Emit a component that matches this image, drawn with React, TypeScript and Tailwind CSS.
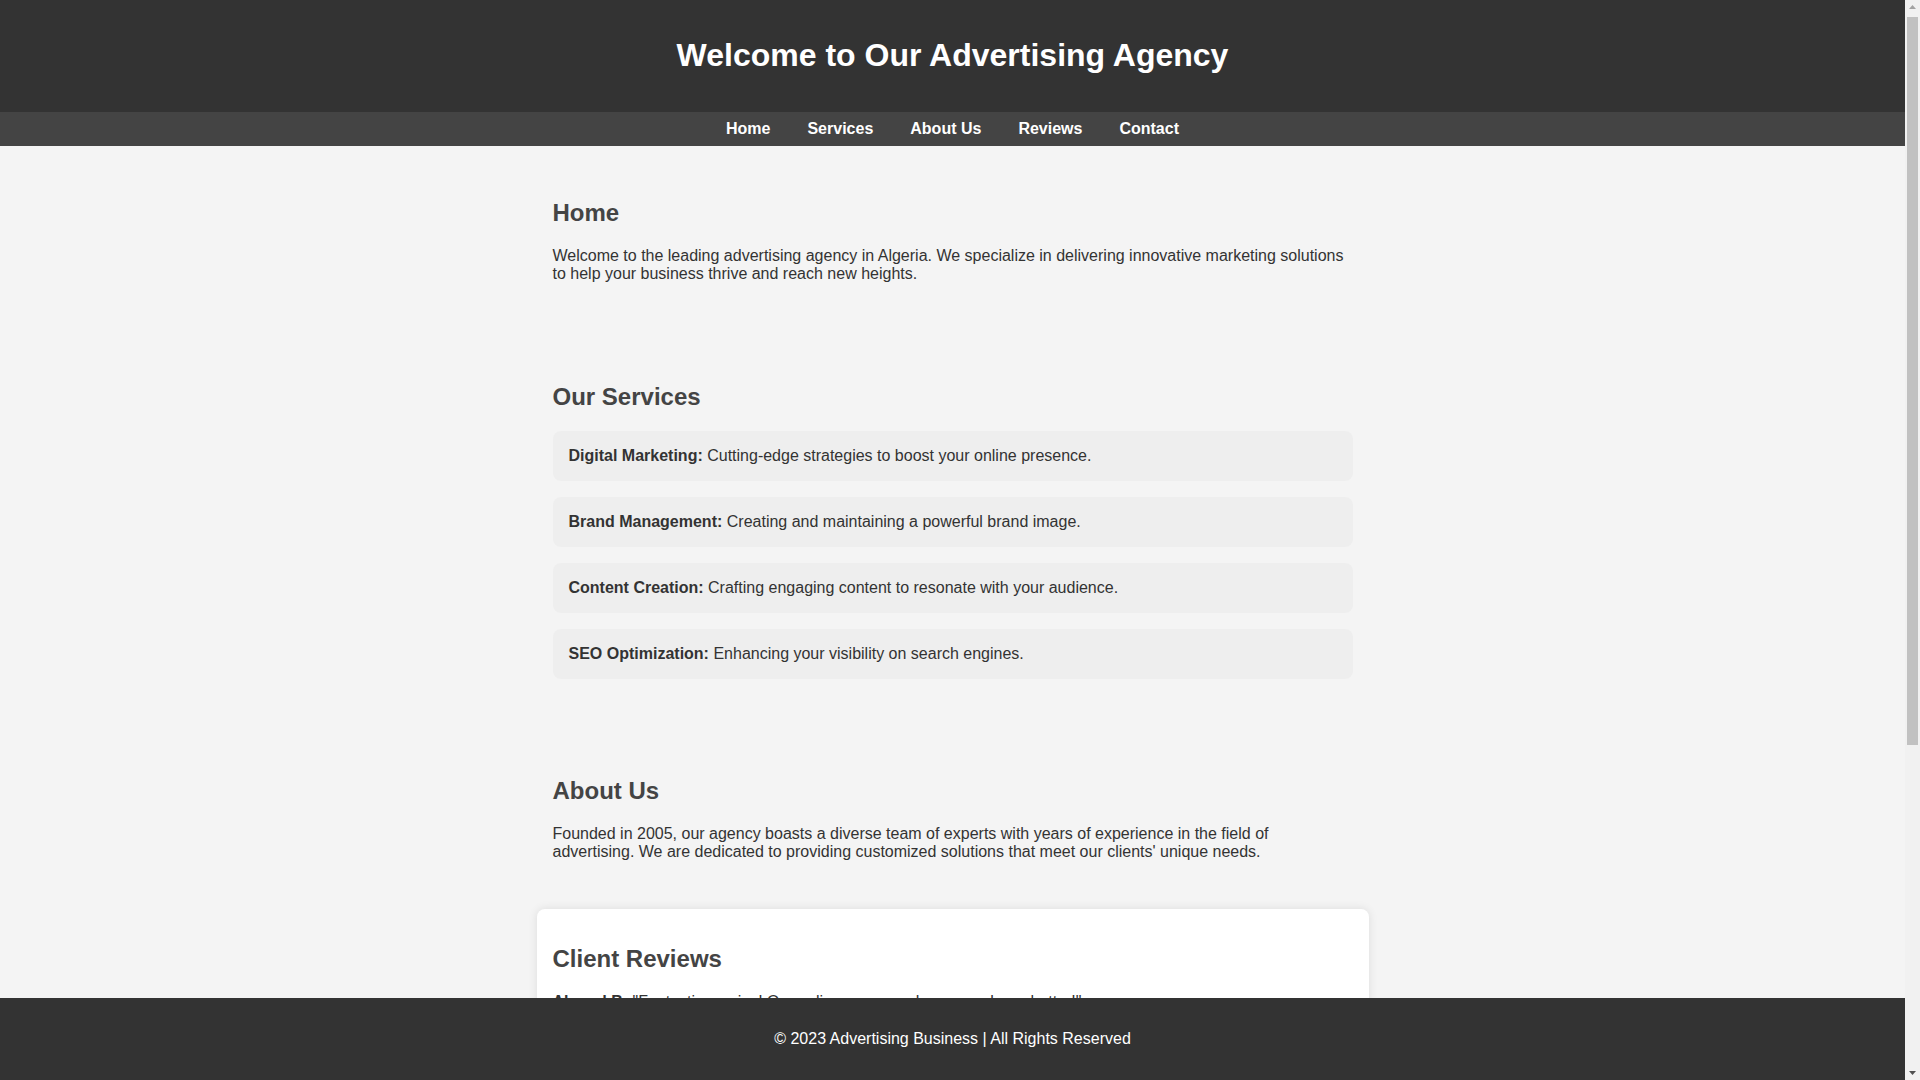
import * as React from "react";

type Service = { name: string; text: string };
type Review = { author: string; text: string };

const services: Service[] = [
  { name: "Digital Marketing:", text: "Cutting-edge strategies to boost your online presence." },
  { name: "Brand Management:", text: "Creating and maintaining a powerful brand image." },
  { name: "Content Creation:", text: "Crafting engaging content to resonate with your audience." },
  { name: "SEO Optimization:", text: "Enhancing your visibility on search engines." },
];

const reviews: Review[] = [
  { author: "Ahmed B.:", text: "\"Fantastic service! Our online presence has never been better!\"" },
  { author: "Sara K.:", text: "\"Professional team and creative ideas. Highly recommended.\"" },
  { author: "Yacine M.:", text: "\"Our sales grew thanks to their digital marketing campaigns.\"" },
];

const navLinks = ["Home", "Services", "About Us", "Reviews", "Contact"];

// 브라우저 스크롤바 모양
function ScrollBar() {
  return (
    <div className="flex w-[15px] shrink-0 flex-col items-center bg-[#f1f1f1]">
      <svg width="15" height="15" viewBox="0 0 15 15" className="shrink-0">
        <path d="M4 9 L7.5 5 L11 9 Z" fill="#a3a3a3" />
      </svg>
      <div className="mt-[2px] h-[728px] w-[11px] bg-[#c1c1c1]" />
      <div className="flex-1" />
      <svg width="15" height="15" viewBox="0 0 15 15" className="shrink-0">
        <path d="M4 6 L7.5 10 L11 6 Z" fill="#505050" />
      </svg>
    </div>
  );
}

export default function App() {
  const [form, setForm] = React.useState({ name: "", email: "", message: "" });

  return (
    <div className="flex h-screen font-['Liberation_Sans',Arial,sans-serif] text-base leading-[normal] text-[#333]">
      <div className="flex-1 overflow-y-auto bg-[#f4f4f4] [scrollbar-width:none]">
        {/* 헤더 */}
        <header className="bg-[#333] p-4 text-center text-white">
          <h1 className="my-[21.44px] text-[32px] font-bold leading-[normal]">Welcome to Our Advertising Agency</h1>
        </header>

        {/* 메뉴 */}
        <nav className="flex h-[34px] items-center justify-center gap-[37px] bg-[#444]">
          {navLinks.map((link) => (
            <a key={link} href="#" className="font-bold text-white">
              {link}
            </a>
          ))}
        </nav>

        <main className="mx-auto w-[832px] pt-[17px] pb-[100px]">
          {/* Home */}
          <section className="mb-8 p-4">
            <h2 className="my-5 text-2xl leading-[normal] font-bold text-[#444]">Home</h2>
            <p className="mb-4">
              Welcome to the leading advertising agency in Algeria. We specialize in delivering innovative marketing
              solutions to help your business thrive and reach new heights.
            </p>
          </section>

          {/* 서비스 */}
          <section className="mb-[30px] p-4">
            <h2 className="my-5 text-2xl leading-[normal] font-bold text-[#444]">Our Services</h2>
            <ul className="mb-4">
              {services.map((s) => (
                <li key={s.name} className="mb-4 rounded-lg bg-[#eee] p-4">
                  <strong>{s.name}</strong> {s.text}
                </li>
              ))}
            </ul>
          </section>

          {/* 회사 소개 */}
          <section className="mb-4 p-4">
            <h2 className="my-5 text-2xl leading-[normal] font-bold text-[#444]">About Us</h2>
            <p className="mb-4 pr-[50px]">
              Founded in 2005, our agency boasts a diverse team of experts with years of experience in the field of
              advertising. We are dedicated to providing customized solutions that meet our clients' unique needs.
            </p>
          </section>

          {/* 후기 */}
          <section className="mb-8 rounded-lg bg-white p-4 shadow-[0_0_10px_rgba(0,0,0,0.1)]">
            <h2 className="my-5 text-2xl leading-[normal] font-bold text-[#444]">Client Reviews</h2>
            {reviews.map((r) => (
              <p key={r.author} className="mb-4">
                <strong>{r.author}</strong>
                {r.text}
              </p>
            ))}
          </section>

          {/* 문의 */}
          <section className="p-4">
            <h2 className="my-5 text-2xl leading-[normal] font-bold text-[#444]">Contact Us</h2>
            <p className="mb-4">Get in touch with us to discuss your next campaign.</p>
            <div className="flex flex-col gap-3">
              <input
                className="rounded border border-[#ccc] bg-white p-2"
                placeholder="Your Name"
                value={form.name}
                onChange={(e) => setForm({ ...form, name: e.target.value })}
              />
              <input
                className="rounded border border-[#ccc] bg-white p-2"
                placeholder="Your Email"
                value={form.email}
                onChange={(e) => setForm({ ...form, email: e.target.value })}
              />
              <textarea
                className="h-[120px] rounded border border-[#ccc] bg-white p-2"
                placeholder="Your Message"
                value={form.message}
                onChange={(e) => setForm({ ...form, message: e.target.value })}
              />
              <button className="w-[120px] rounded bg-[#333] px-4 py-2 text-white">Send</button>
            </div>
          </section>
        </main>
      </div>

      <ScrollBar />

      {/* 푸터 */}
      <footer className="fixed right-[15px] bottom-0 left-0 bg-[#333] py-4 text-center text-white">
        <p className="my-4">© 2023 Advertising Business | All Rights Reserved</p>
      </footer>
    </div>
  );
}
